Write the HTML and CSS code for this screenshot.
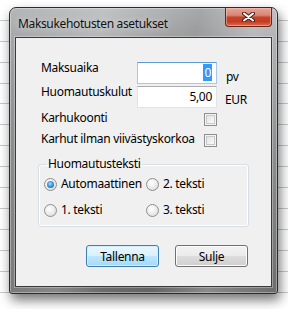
FILE: index.html
```html
<!DOCTYPE html>
<html lang="fi">
  <head>
    <meta charset="UTF-8" />
    <title>Maksukehotusten asetukset</title>
    <link rel="stylesheet" href="styles.css">
  </head>
  <body>
    <div class="window">
      <div class="caption">Maksukehotusten asetukset</div>
      <div class="close-btn">
        <svg width="13" height="10" viewBox="0 0 13 10">
          <path d="M2 1.5 L11 8.5 M11 1.5 L2 8.5" stroke="#4b1f17" stroke-width="4" stroke-linecap="round" fill="none" />
          <path d="M2 1.5 L11 8.5 M11 1.5 L2 8.5" stroke="#ffffff" stroke-width="2" stroke-linecap="round" fill="none" />
        </svg>
      </div>

      <div class="client">
        <div class="row row-input">
          <span class="label">Maksuaika</span>
          <div class="textbox focused"><span class="selected">0</span></div>
          <span class="unit unit-pv">pv</span>
        </div>
        <div class="row row-input">
          <span class="label">Huomautuskulut</span>
          <div class="textbox">5,00</div>
          <span class="unit unit-eur">EUR</span>
        </div>
        <div class="row row-check">
          <span class="label">Karhukoonti</span>
          <span class="checkbox"></span>
        </div>
        <div class="row row-check">
          <span class="label">Karhut ilman viivästyskorkoa</span>
          <span class="checkbox"></span>
        </div>

        <fieldset class="group">
          <legend>Huomautusteksti</legend>
          <div class="radio-grid">
            <div class="radio-item"><span class="radio checked"></span>Automaattinen</div>
            <div class="radio-item"><span class="radio"></span>2. teksti</div>
            <div class="radio-item"><span class="radio"></span>1. teksti</div>
            <div class="radio-item"><span class="radio"></span>3. teksti</div>
          </div>
        </fieldset>

        <div class="buttons">
          <button class="btn default">Tallenna</button>
          <button class="btn">Sulje</button>
        </div>
      </div>
    </div>
  </body>
</html>
```

FILE: styles.css
```css
body {
  margin: 0;
  width: 288px;
  height: 309px;
  overflow: hidden;
  font-family: "Noto Sans", "Open Sans", sans-serif;
  font-size: 12px;
  letter-spacing: -0.3px;
  color: #000;
  background-color: #fff;
  background-image: repeating-linear-gradient(
    to bottom,
    transparent 0,
    transparent 19.9px,
    #c8c8c8 19.9px,
    #c8c8c8 20.9px
  );
}

.window {
  position: relative;
  margin: 7px 0 0 9px;
  width: 269px;
  height: 287px;
  box-sizing: border-box;
  padding: 29px 5px 6px 5px;
  border: 1px solid #2b2b2b;
  border-radius: 7px 7px 3px 3px;
  background:
    linear-gradient(100deg, rgba(255, 255, 255, 0) 0%, rgba(255, 255, 255, 0.18) 30%, rgba(255, 255, 255, 0) 45%, rgba(0, 0, 0, 0.08) 60%, rgba(255, 255, 255, 0.2) 78%, rgba(255, 255, 255, 0) 100%),
    linear-gradient(to bottom, #b5b6b7 0%, #a3a4a5 12%, #878889 45%, #6c6c6c 100%);
  box-shadow:
    inset 0 0 0 1px rgba(255, 255, 255, 0.35),
    2px 6px 12px rgba(0, 0, 0, 0.55);
}

.caption {
  position: absolute;
  left: 8px;
  top: 8px;
  font-size: 12px;
  letter-spacing: -0.35px;
  line-height: 16px;
  color: #111;
  text-shadow: 0 0 6px rgba(255, 255, 255, 0.7);
}

.close-btn {
  position: absolute;
  top: 0;
  right: 5px;
  width: 47px;
  height: 19px;
  box-sizing: border-box;
  border: 1px solid #6a2419;
  border-top: none;
  border-radius: 0 0 4px 4px;
  background: linear-gradient(to bottom, #e6a597 0%, #d98775 40%, #c5432b 52%, #c43c22 75%, #df6a4e 100%);
  box-shadow: inset 0 0 0 1px rgba(255, 210, 200, 0.45);
  display: flex;
  align-items: center;
  justify-content: center;
}

.client {
  height: 250px;
  box-sizing: border-box;
  border: 1px solid #3a3a3a;
  background: #f0f0f0;
  padding: 24px 0 0 25px;
  box-shadow: 0 0 0 1px rgba(255, 255, 255, 0.3);
}

.row {
  display: grid;
  grid-template-columns: 96px 80px auto;
  align-items: start;
}
.row-input {
  height: 22px;
  margin-bottom: 2px;
}
.row-check {
  height: 16px;
  margin-bottom: 5px;
}

.label {
  white-space: nowrap;
  line-height: 16px;
}
.row-input .label {
  margin-top: -2px;
}

.textbox {
  height: 22px;
  box-sizing: border-box;
  border: 1px solid #e2e3ea;
  border-top-color: #abadb3;
  background: #fff;
  text-align: right;
  padding: 2px 4px 0 0;
  line-height: 16px;
}
.textbox.focused {
  border-color: #a4c9ed;
  border-top-color: #5c9ad6;
}
.selected {
  background: #3399ff;
  color: #fff;
  padding: 0 1px;
}

.unit {
  margin-left: 9px;
  line-height: 16px;
}
.unit-pv {
  margin-top: 7px;
}
.unit-eur {
  margin-top: 6px;
  margin-left: 8px;
}

.checkbox {
  grid-column: 2;
  justify-self: end;
  margin-top: 3px;
  width: 13px;
  height: 13px;
  box-sizing: border-box;
  border: 1px solid #8e8f8f;
  background: linear-gradient(135deg, #dcdcdc 0%, #f6f6f6 70%, #ffffff 100%);
  box-shadow: inset 0 0 0 1px #f4f4f4, inset 0 0 0 2px #c9c9c9;
}

.group {
  margin: 9px 0 0 -3px;
  width: 211px;
  box-sizing: border-box;
  padding: 4px 5px 8px 5px;
  border: 1px solid #d5dfe5;
  border-radius: 3px;
  box-shadow: inset 0 0 0 1px #ffffff;
}
.group legend {
  padding: 0 1px;
  margin-left: 3px;
  line-height: 16px;
}

.radio-grid {
  display: grid;
  grid-template-columns: 102px auto;
  row-gap: 10px;
}
.radio-item {
  display: flex;
  align-items: center;
  gap: 4px;
  line-height: 16px;
  white-space: nowrap;
}
.radio {
  width: 13px;
  height: 13px;
  box-sizing: border-box;
  border-radius: 50%;
  border: 1px solid #8e8f8f;
  background: radial-gradient(circle at 40% 35%, #ffffff 0%, #e8e8e8 60%, #cfcfcf 100%);
  position: relative;
  flex: none;
}
.radio.checked::after {
  content: "";
  position: absolute;
  left: 2px;
  top: 2px;
  width: 7px;
  height: 7px;
  border-radius: 50%;
  background: radial-gradient(circle at 45% 40%, #a7e0ff 0%, #3a9ae0 45%, #154f87 100%);
}

.buttons {
  display: flex;
  justify-content: flex-end;
  gap: 16px;
  padding-right: 23px;
  margin-top: 18px;
}
.btn {
  width: 73px;
  height: 22px;
  padding: 0;
  font-family: inherit;
  font-size: 12px;
  letter-spacing: inherit;
  color: #000;
  border: 1px solid #707070;
  border-radius: 3px;
  background: linear-gradient(to bottom, #f2f2f2 0%, #ebebeb 50%, #dddddd 51%, #cfcfcf 100%);
  box-shadow: inset 0 0 0 1px #fcfcfc;
}
.btn.default {
  border-color: #3c7fb1;
  background: linear-gradient(to bottom, #eaf6fd 0%, #d9f0fc 50%, #bee6fd 51%, #a7d9f5 100%);
  box-shadow: inset 0 0 0 1px #d3efff;
}
```
